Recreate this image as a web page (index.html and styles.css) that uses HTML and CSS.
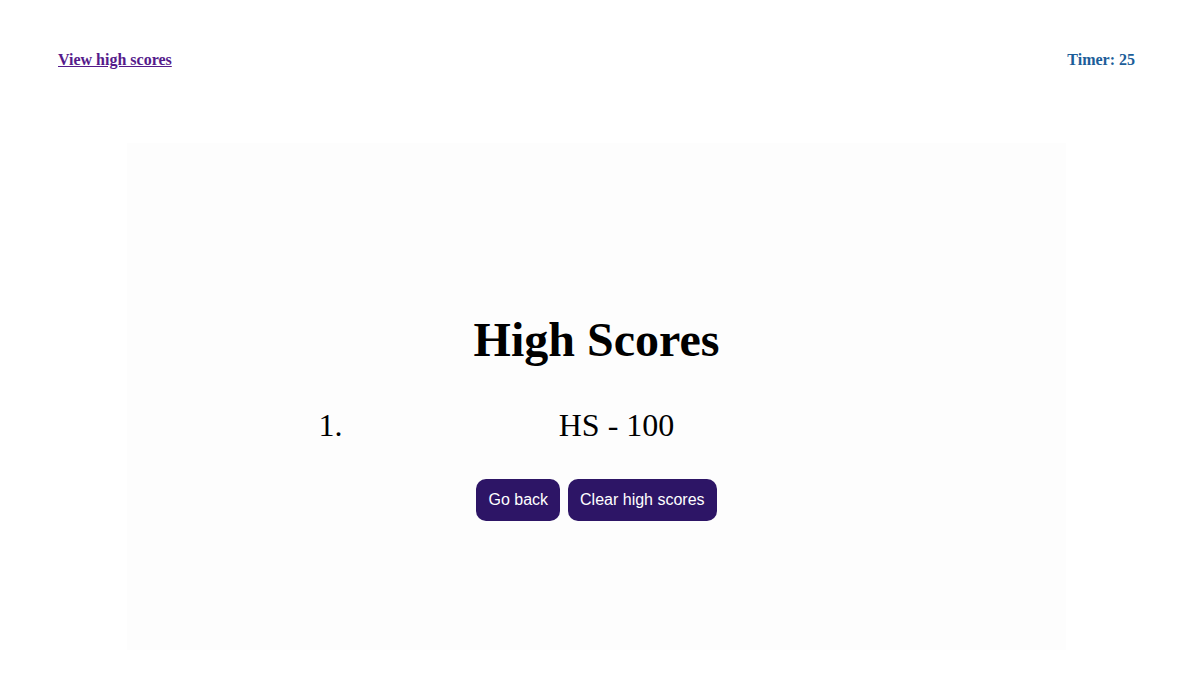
FILE: index.html
```html
<!DOCTYPE html>
<html>
<head>
<meta charset="utf-8">
<link rel="stylesheet" href="styles.css">
</head>
<body>
<header class="topbar">
  <a class="scores-link" href="#">View high scores</a>
  <div class="timer">Timer: 25</div>
</header>
<main class="panel">
  <h1 class="title">High Scores</h1>
  <ol class="score-list">
    <li>HS - 100</li>
  </ol>
  <div class="actions">
    <button class="btn">Go back</button>
    <button class="btn">Clear high scores</button>
  </div>
</main>
</body>
</html>
```
FILE: styles.css
```css
html, body {
  margin: 0;
  padding: 0;
  background: #ffffff;
  font-family: "Liberation Serif", "Times New Roman", serif;
}

.topbar {
  display: flex;
  justify-content: space-between;
  align-items: flex-start;
  padding: 51px 58px 0 58px;
  font-size: 16px;
  font-weight: bold;
  line-height: 18px;
}

.scores-link {
  color: #551a8b;
  text-decoration: underline;
}

.timer {
  color: #1c5e99;
}

.panel {
  width: 939px;
  height: 507px;
  box-sizing: border-box;
  margin: 74px auto 0;
  padding-top: 169px;
  background: #fdfdfd;
  display: flex;
  flex-direction: column;
  align-items: center;
}

.title {
  margin: 0;
  font-size: 48px;
  font-weight: bold;
  line-height: 55px;
  color: #000;
}

.score-list {
  width: 572px;
  box-sizing: border-box;
  margin: 40px 0 0;
  padding-left: 40px;
  font-size: 32px;
  line-height: 37px;
  text-align: center;
}

.actions {
  display: flex;
  gap: 8px;
  margin-top: 35px;
}

.btn {
  font-family: "Liberation Sans", Arial, sans-serif;
  font-size: 16px;
  line-height: 18px;
  color: #ffffff;
  background: #2d1566;
  border: none;
  border-radius: 10px;
  padding: 12px 12px;
}
```
